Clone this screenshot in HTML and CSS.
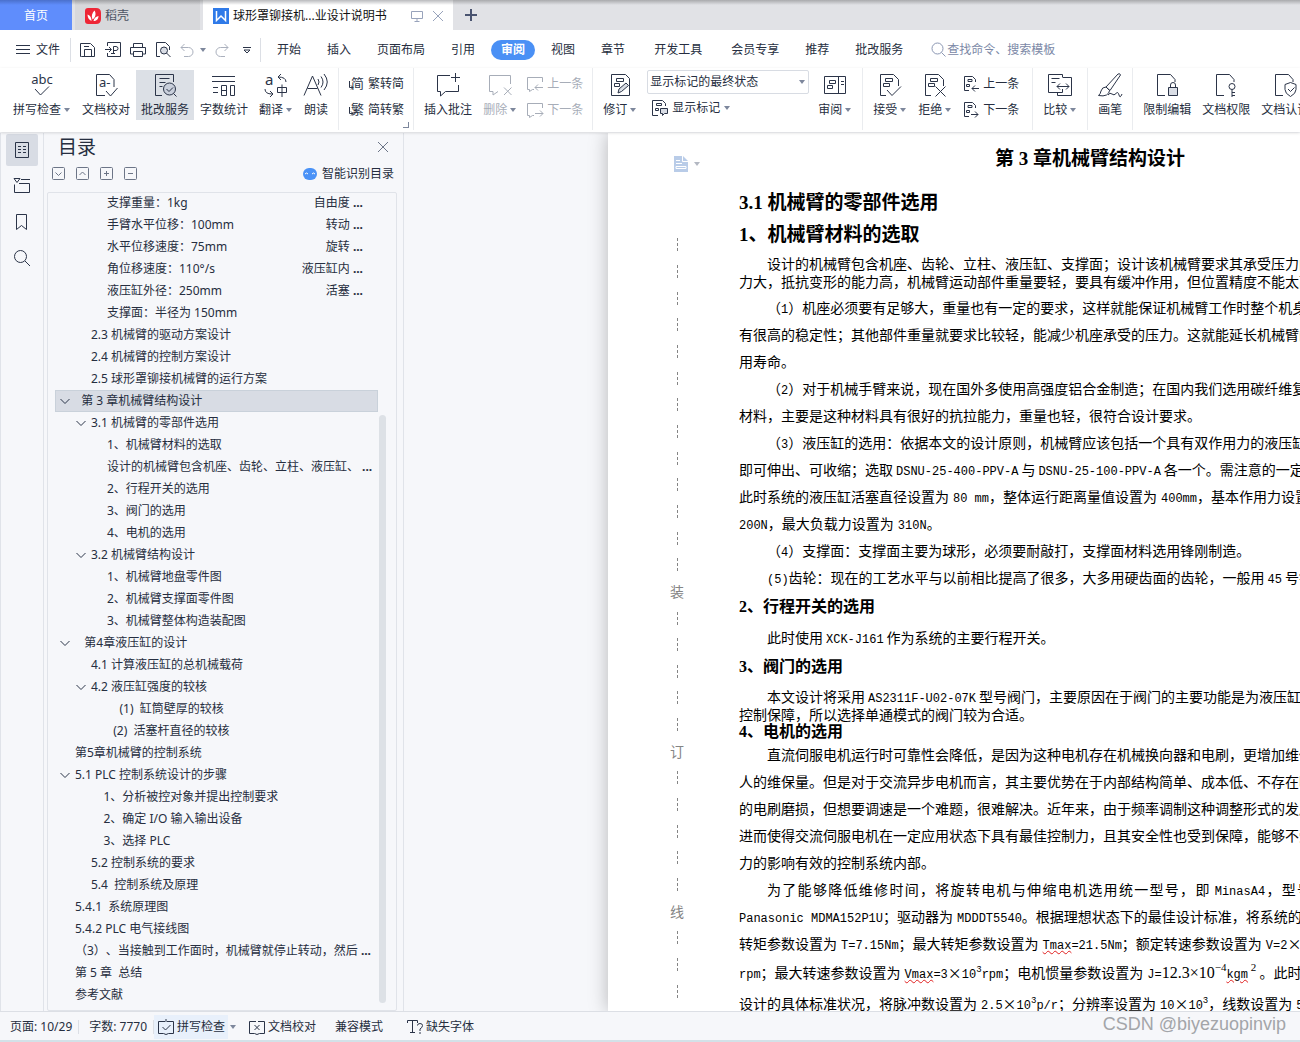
FILE: index.html
```html
<!DOCTYPE html>
<html lang="zh-CN">
<head>
<meta charset="utf-8">
<title>球形罩铆接机械臂毕业设计说明书</title>
<link rel="stylesheet" href="styles.css">
</head>
<body>
<svg class="sprite" aria-hidden="true">
  <symbol id="comment" viewBox="0 0 24 24"><path d="M14 2.500H1.500v16h3v4.500l5-4.500h13V12"/></symbol>
  <symbol id="revdoc" viewBox="0 0 24 24"><path d="M8 22.500H2.500v-21h13l5 5V13M7.500 5.500h7v3h-7zM5.500 10.500h6v3h-6z"/></symbol>
  <symbol id="sheet" viewBox="0 0 24 24"><path d="M10 22.500H2.500v-21h13l4.500 5V9"/></symbol>
  <symbol id="revdoc-s" viewBox="0 0 16 16"><path d="M6 14.500H1.500v-14h8l3 3V6M5 3.500h4v2H5zM3.500 8.500h3v2h-3z"/></symbol>
  <symbol id="note-s" viewBox="0 0 16 16"><path d="M15.500 6V1.500H.5v12h2v2l3-2H7"/></symbol>
  <symbol id="chev" viewBox="0 0 10 10"><path d="M.5 3L5 7.500 9.500 3"/></symbol>
</svg>

<header class="tabbar">
  <button class="tab home">首页</button>
  <button class="tab docer"><svg width="16" height="16" viewBox="0 0 16 16" stroke="none"><path d="M3 0h8q5 0 5 5v6q0 5-5 5H3q-3 0-3-3V3q0-3 3-3z" fill="#ee2636" stroke="none"/><path d="M7.500 11.500C6 8 7 5 9.500 2.500 11.500 6 10.500 9.500 7.500 11.500zM6.500 13C3.500 11.500 2.500 9 2.500 6.500 5.500 7.500 6.500 10 6.500 13zM8.500 13c.5-2.500 2-4.500 5-5C13.500 11 11.500 13 8.500 13z" fill="#fff" stroke="none"/></svg>稻壳</button>
  <div class="tab active">
    <svg width="16" height="16" viewBox="0 0 16 16"><path fill="#2f7ae8" stroke="none" d="M0 0h16v16H0z"/><path d="M3.500 3v9.500L8 8l4.500 4.500V3" fill="none" stroke="#fff" stroke-width="1.500"/></svg>
    <span class="tab-name">球形罩铆接机...业设计说明书</span>
    <button class="bare" aria-label="窗口"><svg class="muted" width="12" height="12" viewBox="0 0 12 12"><path d="M.5 1.500h11v7H.5zM6 8.500v3M3.500 11.500h5"/></svg></button>
    <button class="bare" aria-label="关闭"><svg class="muted" width="12" height="12" viewBox="0 0 12 12"><path d="M1 1l10 10M11 1L1 11"/></svg></button>
  </div>
  <button class="bare plus" aria-label="新建"><svg width="12" height="12" viewBox="0 0 12 12"><path d="M6 0v12M0 6h12" stroke="#4a5470" stroke-width="2"/></svg></button>
</header>

<nav class="menubar">
  <button class="file"><svg width="14" height="14" viewBox="0 0 14 14"><path d="M0 2.500h14M0 6.500h14M0 10.500h14"/></svg>文件</button>
  <div class="quick">
    <button class="bare" aria-label="保存"><svg width="16" height="16" viewBox="0 0 16 16"><path d="M1.500 14.500h-1V1.500h10l4 4v9zM4.500 14V7.500h7V14M4 4.500h5"/></svg></button>
    <button class="bare" aria-label="输出为PDF"><svg width="16" height="16" viewBox="0 0 16 16"><path d="M2.500 4V.5h13v14h-13V11M0 7.500h6M4 5l2.500 2.500L4 10M8.500 11V4.500h2.500q2 0 2 2t-2 2H8.500M6 11.500h4"/></svg></button>
    <button class="bare" aria-label="打印"><svg width="16" height="16" viewBox="0 0 16 16"><path d="M3.500 5V1.500h9V5M3.500 12h-3V5.500h15V12h-3M3.500 9.500h9v5h-9z"/></svg></button>
    <button class="bare" aria-label="打印预览"><svg width="16" height="16" viewBox="0 0 16 16"><path d="M5 14.500H1.500V.5h9l4 4V8"/><circle cx="9" cy="8.500" r="3.500" fill="#d9dde5"/><path d="M11.500 11l4 4"/></svg></button>
    <button class="bare undo" aria-label="撤销"><svg class="off" width="14" height="14" viewBox="0 0 14 14"><path d="M4.500 1L1 4.500 4.500 8M1 4.500h7.500a4 4 0 0 1 0 9H4"/></svg><i class="caret"></i></button>
    <button class="bare" aria-label="恢复"><svg class="off" width="14" height="14" viewBox="0 0 14 14"><path d="M9.500 1L13 4.500 9.500 8M13 4.500H5.500a4 4 0 0 0 0 9H10"/></svg></button>
    <button class="bare more" aria-label="更多"><svg width="8" height="8" viewBox="0 0 8 8"><path d="M0 1.500h8M1 4l3 3 3-3z"/></svg></button>
  </div>
  <div class="menus">
    <button>开始</button><button>插入</button><button>页面布局</button><button>引用</button><button class="on">审阅</button><button>视图</button><button>章节</button><button class="apart">开发工具</button><button class="apart">会员专享</button><button>推荐</button><button>批改服务</button>
  </div>
  <label class="search"><svg width="16" height="16" viewBox="0 0 16 16"><circle cx="6.500" cy="6.500" r="5.500"/><path d="M10.500 10.500l4 4"/></svg><input type="text" aria-label="查找" placeholder="查找命令、搜索模板"></label>
</nav>

<section class="ribbon">
  <button class="big drop"><svg viewBox="0 0 24 24"><text x="12" y="11" text-anchor="middle" font-size="13">abc</text><path d="M5 16l5.500 6L19 13.500"/></svg><span>拼写检查<i class="caret"></i></span></button>
  <button class="big"><svg viewBox="0 0 24 24"><path d="M11 22.500H2.500v-21h13l4.500 5V14M12 18l4.500 5 7-8"/><text x="5" y="14" font-size="13">a-</text></svg><span>文档校对</span></button>
  <button class="big pressed"><svg viewBox="0 0 24 24"><path d="M9 22.500H2.500v-21h18V9M6.500 5.500h10M6.500 9.500h6M6.500 13.500h3"/><circle cx="16.500" cy="16" r="6" fill="#c9cfdb"/><path d="M13.500 16l2.500 2.500 4-4M20.500 20.500l3 3"/></svg><span>批改服务</span></button>
  <button class="big"><svg viewBox="0 0 24 24"><path d="M0 3.500h23M0 8.500h23M1 14.500h5M1 19.500h5M9.500 12.500h5v10h-5zM9.500 17.500h5M18.500 12.500h4v10h-4z"/></svg><span>字数统计</span></button>
  <button class="big drop"><svg viewBox="0 0 24 24"><text x="1" y="12" font-size="15">a</text><path d="M1 16q0 5 7 5M6 18l3 3-3 3M17 1l-3 3 3 3M14 4q8 0 8 5M13.500 14.500h9v5h-9zM18 11.500V24"/></svg><span>翻译<i class="caret"></i></span></button>
  <button class="big"><svg viewBox="0 0 24 24"><path d="M0 22.500L8.500 3 17 22.500M3.500 15.500h10M14 6q2 3 0 6M17 3.500q4 5.500 0 11M20 1q6.500 8 0 16"/></svg><span>朗读</span></button>
  <i class="sep"></i>
  <div class="stack corner">
    <button><svg viewBox="0 0 16 16"><text x="3" y="12" font-size="13">简</text><path d="M1.500 5v6.500H5M3 9.500l2 2-2 2"/></svg>繁转简</button>
    <button><svg viewBox="0 0 16 16"><text x="3" y="12" font-size="13">繁</text><path d="M1.500 5v6.500H5M3 9.500l2 2-2 2"/></svg>简转繁</button>
  </div>
  <i class="sep"></i>
  <button class="big"><svg viewBox="0 0 24 24"><use href="#comment"/><path d="M19.500 0v9M15 4.500h9"/></svg><span>插入批注</span></button>
  <button class="big drop" disabled><svg viewBox="0 0 24 24"><path d="M10 18.500L5 22v-3.500H1.500v-16h21V11M16 14.500l7.500 7.500M23.500 14.500L16 22"/></svg><span>删除<i class="caret"></i></span></button>
  <div class="stack">
    <button disabled><svg viewBox="0 0 16 16"><use href="#note-s"/><path d="M16 11.500H8M11 8.500l-3 3 3 3"/></svg>上一条</button>
    <button disabled><svg viewBox="0 0 16 16"><use href="#note-s"/><path d="M8 11.500h8M13 8.500l3 3-3 3"/></svg>下一条</button>
  </div>
  <i class="sep"></i>
  <button class="big drop"><svg viewBox="0 0 24 24"><path d="M3.500 1.500h14l4 4v17h-18zM8.500 5.500h7v3h-7zM6.500 10.500h5v3h-5z"/><path d="M10 20l1-4 7-6 2.500 2.500-7 6z" fill="#d9dde5"/></svg><span>修订<i class="caret"></i></span></button>
  <div class="stack markup">
    <div class="picker"><select aria-label="修订显示方式"><option>显示标记的最终状态</option></select><i class="caret"></i></div>
    <button><svg viewBox="0 0 16 16"><path d="M6 15.500H.5V.5h10l3 3V6M4.500 3.500h5v2h-5zM3.500 8.500h3v2h-3z"/><path d="M8.500 8.500h7v5h-3l-2 2v-2h-2z" fill="#d9dde5"/></svg>显示标记<i class="caret"></i></button>
  </div>
  <button class="big drop"><svg viewBox="0 0 24 24"><path d="M1.500 3.500h21v17h-21zM15.500 3.500v17M6.500 7.500h6v3h-6zM4.500 12.500h5v3h-5zM18 8.500h3M18 11.500h3"/></svg><span>审阅<i class="caret"></i></span></button>
  <i class="sep"></i>
  <button class="big drop"><svg viewBox="0 0 24 24"><use href="#revdoc"/><path d="M9 17l5 5.500 9-9"/></svg><span>接受<i class="caret"></i></span></button>
  <button class="big drop"><svg viewBox="0 0 24 24"><use href="#revdoc"/><path d="M12.500 13.500l10 10M22.500 13.500l-10 10"/></svg><span>拒绝<i class="caret"></i></span></button>
  <div class="stack roomy">
    <button><svg viewBox="0 0 16 16"><use href="#revdoc-s"/><path d="M16 12.500H9M12 9.500l-3 3 3 3"/></svg>上一条</button>
    <button><svg viewBox="0 0 16 16"><use href="#revdoc-s"/><path d="M8 12.500h7M12 9.500l3 3-3 3"/></svg>下一条</button>
  </div>
  <i class="sep"></i>
  <button class="big drop"><svg viewBox="0 0 24 24"><path d="M14.500 4V1.500H.5v18h14V16M3.500 5.500h8M3.500 9.500h4M14.500 4.500h9v18h-14v-3M9 13.500h12M12 10.500l-3 3 3 3M18 10.500l3 3-3 3"/></svg><span>比较<i class="caret"></i></span></button>
  <i class="sep"></i>
  <button class="big"><svg viewBox="0 0 24 24"><path d="M8 14L20 1q2-1 2.500 1L12 17.500zM8 14q-4 0-5 4-.5 3-2.500 4.500 5 1 8-.5 3-2 3-4.500zM10 22q2-3 4-1t4-.5 3 1.500 3-1"/></svg><span>画笔</span></button>
  <i class="sep"></i>
  <button class="big"><svg viewBox="0 0 24 24"><use href="#sheet"/><path d="M13.500 14.500h9v8h-9z" fill="#d9dde5"/><path d="M15.500 14.500V12q0-2.500 2.500-2.500t2.500 2.500v2.500"/></svg><span>限制编辑</span></button>
  <button class="big"><svg viewBox="0 0 24 24"><use href="#sheet"/><circle cx="18" cy="13.500" r="3"/><path d="M18 16.500V24M18 19.500h3M18 22.500h3"/></svg><span>文档权限</span></button>
  <button class="big"><svg viewBox="0 0 24 24"><use href="#sheet"/><path d="M17.500 9.500l5.500 2v5q0 4-5.500 7-5.500-3-5.500-7v-5zM15 16l2.500 2.500 4-4"/></svg><span>文档认证</span></button>
</section>

<main class="work">
  <nav class="side">
    <button class="on" aria-label="目录"><svg width="16" height="16" viewBox="0 0 16 16"><path d="M1.500.5h13v15h-13zM4 4.500h3M4 7.500h3M4 10.500h3M9 4.500h3M9 7.500h3M9 10.500h3"/></svg></button>
    <button aria-label="章节"><svg width="16" height="16" viewBox="0 0 16 16"><path d="M.5 6.500V14.500h15v-9H5M7 1.500h9M0 .5h6L3 4.500z"/></svg></button>
    <button aria-label="书签"><svg width="16" height="16" viewBox="0 0 16 16"><path d="M2.500.5h10v15l-5-4-5 4z"/></svg></button>
    <button aria-label="查找"><svg width="16" height="16" viewBox="0 0 16 16"><circle cx="6.500" cy="6.500" r="6"/><path d="M11 11l5 5"/></svg></button>
  </nav>

  <aside class="outline">
    <div class="outline-head"><h2>目录</h2><button class="bare" aria-label="关闭目录"><svg class="thin" width="12" height="12" viewBox="0 0 12 12"><path d="M1 1l10 10M11 1L1 11"/></svg></button></div>
    <div class="outline-tools">
      <button class="bare" aria-label="展开"><svg width="14" height="14" viewBox="0 0 14 14"><rect x=".5" y=".5" width="12" height="12" rx="1"/><path d="M3.500 5.500l3 3 3-3"/></svg></button>
      <button class="bare" aria-label="收缩"><svg width="14" height="14" viewBox="0 0 14 14"><rect x=".5" y=".5" width="12" height="12" rx="1"/><path d="M3.500 8l3-3 3 3"/></svg></button>
      <button class="bare" aria-label="增加级别"><svg width="14" height="14" viewBox="0 0 14 14"><rect x=".5" y=".5" width="12" height="12" rx="1"/><path d="M4 6.500h5M6.500 4v5"/></svg></button>
      <button class="bare" aria-label="减少级别"><svg width="14" height="14" viewBox="0 0 14 14"><rect x=".5" y=".5" width="12" height="12" rx="1"/><path d="M4 6.500h5"/></svg></button>
      <button class="bare smart"><svg width="14" height="14" viewBox="0 0 14 14"><rect y="1" width="14" height="12" rx="6" fill="#4a92f7" stroke="none"/><path d="M2 7q1.500-2 3 0M9 7q1.500-2 3 0" stroke="#fff"/></svg>智能识别目录</button>
    </div>
    <div class="tree">
      <ul>
        <li class="d3">支撑重量：1kg<span class="tail">自由度<b>...</b></span></li>
        <li class="d3">手臂水平位移：100mm<span class="tail">转动<b>...</b></span></li>
        <li class="d3">水平位移速度：75mm<span class="tail">旋转<b>...</b></span></li>
        <li class="d3">角位移速度：110°/s<span class="tail">液压缸内<b>...</b></span></li>
        <li class="d3">液压缸外径：250mm<span class="tail">活塞<b>...</b></span></li>
        <li class="d3">支撑面：半径为 150mm</li>
        <li class="d2">2.3 机械臂的驱动方案设计</li>
        <li class="d2">2.4 机械臂的控制方案设计</li>
        <li class="d2">2.5 球形罩铆接机械臂的运行方案</li>
        <li class="d1 current"><svg><use href="#chev"/></svg>  第 3 章机械臂结构设计</li>
        <li class="d2"><svg><use href="#chev"/></svg>3.1 机械臂的零部件选用</li>
        <li class="d3">1、机械臂材料的选取</li>
        <li class="d3">设计的机械臂包含机座、齿轮、立柱、液压缸、<b>...</b></li>
        <li class="d3">2、行程开关的选用</li>
        <li class="d3">3、阀门的选用</li>
        <li class="d3">4、电机的选用</li>
        <li class="d2"><svg><use href="#chev"/></svg>3.2 机械臂结构设计</li>
        <li class="d3">1、机械臂地盘零件图</li>
        <li class="d3">2、机械臂支撑面零件图</li>
        <li class="d3">3、机械臂整体构造装配图</li>
        <li class="d1"><svg><use href="#chev"/></svg>   第4章液压缸的设计</li>
        <li class="d2">4.1 计算液压缸的总机械载荷</li>
        <li class="d2"><svg><use href="#chev"/></svg>4.2 液压缸强度的较核</li>
        <li class="d3">    (1)  缸筒壁厚的较核</li>
        <li class="d3">  (2)  活塞杆直径的较核</li>
        <li class="d1">第5章机械臂的控制系统</li>
        <li class="d1"><svg><use href="#chev"/></svg>5.1 PLC 控制系统设计的步骤</li>
        <li class="d2">    1、分析被控对象并提出控制要求</li>
        <li class="d2">    2、确定 I/O 输入输出设备</li>
        <li class="d2">    3、选择 PLC</li>
        <li class="d2">5.2 控制系统的要求</li>
        <li class="d2">5.4  控制系统及原理</li>
        <li class="d1">5.4.1  系统原理图</li>
        <li class="d1">5.4.2 PLC 电气接线图</li>
        <li class="d1">（3）、当接触到工作面时，机械臂就停止转动，然后<b>...</b></li>
        <li class="d1">第 5 章  总结</li>
        <li class="d1">参考文献</li>
      </ul>
      <i class="thumb"></i>
    </div>
  </aside>

  <div class="canvas">
    <article class="paper">
      <div class="binding">
        <button class="bare" aria-label="页面选项"><svg width="14" height="16" viewBox="0 0 14 16"><path d="M0 0h9l5 5v11H0z" fill="#b9cce8" stroke="none"/><path d="M8.500 0v5.500H14M2 4.500h4M2 7.500h6M2 10.500h10v2H2z" stroke="#fff"/></svg><i class="caret"></i></button>
        <div class="marks">
          <i></i><i></i><i></i><i></i><i></i><i></i><i></i><i></i><i></i><i></i><i></i><i></i><i></i><span>装</span><i></i><i></i><i></i><i></i><i></i><span>订</span><i></i><i></i><i></i><i></i><i></i><span>线</span><i></i><i></i><i></i>
        </div>
      </div>
      <div class="text">
        <h1>第 3 章机械臂结构设计</h1>
        <h2>3.1 机械臂的零部件选用</h2>
        <h2>1、机械臂材料的选取</h2>
        <p class="tight">设计的机械臂包含机座、齿轮、立柱、液压缸、支撑面；设计该机械臂要求其承受压力的<br>力大，抵抗变形的能力高，机械臂运动部件重量要轻，要具有缓冲作用，但位置精度不能太高</p>
        <p>（<span class="m">1</span>）机座必须要有足够大，重量也有一定的要求，这样就能保证机械臂工作时整个机身<br>有很高的稳定性；其他部件重量就要求比较轻，能减少机座承受的压力。这就能延长机械臂的<br>用寿命。</p>
        <p>（<span class="m">2</span>）对于机械手臂来说，现在国外多使用高强度铝合金制造；在国内我们选用碳纤维复<br>材料，主要是这种材料具有很好的抗拉能力，重量也轻，很符合设计要求。</p>
        <p>（<span class="m">3</span>）液压缸的选用：依据本文的设计原则，机械臂应该包括一个具有双作用力的液压缸<br>即可伸出、可收缩；选取<span class="m both">DSNU-25-400-PPV-A</span>与<span class="m both">DSNU-25-100-PPV-A</span>各一个。需注意的一定就<br>此时系统的液压缸活塞直径设置为<span class="m before">80 mm</span>，整体运行距离量值设置为<span class="m before">400mm</span>，基本作用力设置<br><span class="m">200N</span>，最大负载力设置为<span class="m before">310N</span>。</p>
        <p>（<span class="m">4</span>）支撑面：支撑面主要为球形，必须要耐敲打，支撑面材料选用锋刚制造。</p>
        <p><span class="m">(5)</span>齿轮：现在的工艺水平与以前相比提高了很多，大多用硬齿面的齿轮，一般用<span class="m both">45</span>号钢</p>
        <h3>2、行程开关的选用</h3>
        <p>此时使用<span class="m both">XCK-J161</span>作为系统的主要行程开关。</p>
        <h3>3、阀门的选用</h3>
        <p class="tight">本文设计将采用<span class="m both">AS2311F-U02-07K</span>型号阀门，主要原因在于阀门的主要功能是为液压缸提<br>控制保障，所以选择单通模式的阀门较为合适。</p>
        <h3>4、电机的选用</h3>
        <p>直流伺服电机运行时可靠性会降低，是因为这种电机存在机械换向器和电刷，更增加维修<br>人的维保量。但是对于交流异步电机而言，其主要优势在于内部结构简单、成本低、不存在明<br>的电刷磨损，但想要调速是一个难题，很难解决。近年来，由于频率调制这种调整形式的发展<br>进而使得交流伺服电机在一定应用状态下具有最佳控制力，且其安全性也受到保障，能够不受<br>力的影响有效的控制系统内部。</p>
        <p class="full">为了能够降低维修时间，将旋转电机与伸缩电机选用统一型号，即<span class="m before">MinasA4</span>，型号</p>
        <p class="cont"><span class="m">Panasonic MDMA152P1U</span>；驱动器为<span class="m before">MDDDT5540</span>。根据理想状态下的最佳设计标准，将系统的额<br>转矩参数设置为<span class="m before">T=7.15Nm</span>；最大转矩参数设置为<span class="m before"><u>Tmax</u>=21.5Nm</span>；额定转速参数设置为<span class="m before">V=2</span>×</p>
        <p class="cont tall"><span class="m">rpm</span>；最大转速参数设置为<span class="m before"><u>Vmax</u>=3</span>×<span class="m">10<sup>3</sup></span><span class="m">rpm</span>；电机惯量参数设置为<span class="m before">J=</span><span class="eq">12.3×10<sup>−4</sup></span><span class="m"><u>kgm</u></span><span class="eq"><sup> 2</sup></span> 。此时使<br>设计的具体标准状况，将脉冲数设置为<span class="m before">2.5</span>×<span class="m">10<sup>3</sup>p/r</span>；分辨率设置为<span class="m before">10</span>×<span class="m">10<sup>3</sup></span>，线数设置为<span class="m before">5</span></p>
      </div>
    </article>
  </div>
</main>

<footer class="status">
  <span class="cell">页面: 10/29</span>
  <span class="cell">字数: 7770</span>
  <button class="spell"><svg width="16" height="16" viewBox="0 0 16 16"><path d="M7 2.500H.5v12h5l2.500 1 2.500-1h5v-12H9M8 0v3M4.500 8l3 3 5-5"/></svg>拼写检查</button><i class="caret"></i>
  <button class="proof"><svg width="16" height="16" viewBox="0 0 16 16"><path d="M7 2.500H.5v12h5l2.500 1 2.500-1h5v-12H9M5.500 6l5 5M10.500 6l-5 5"/></svg>文档校对</button>
  <button class="compat">兼容模式</button>
  <button class="fonts"><svg width="16" height="16" viewBox="0 0 16 16"><path d="M.5 4V1.500h10V4M5.500 1.500v12M3 13.500h5M10.500 6.500q0-2 2.500-2t2.500 2-2.500 3.500v2M13 13v2"/></svg>缺失字体</button>
  <span class="watermark">CSDN @biyezuopinvip</span>
</footer>
</body>
</html>
```
FILE: styles.css
```css
* { box-sizing: border-box; }

body {
  margin: 0;
  height: 100vh;
  display: flex;
  flex-direction: column;
  overflow: hidden;
  background: #f6f7fa;
  color: #262e40;
  font: 12px/18px "Noto Sans", "Noto Sans CJK SC", sans-serif;
  text-spacing-trim: space-all;
}

button, input, select { font: inherit; color: inherit; }
button { background: none; border: 0; padding: 0; white-space: nowrap; }
h1, h2, h3, p, ul { margin: 0; padding: 0; }
svg { fill: none; stroke: #2b3448; flex: none; display: block; overflow: visible; }
svg text { fill: #2b3448; stroke: none; }
.sprite { position: absolute; width: 0; height: 0; overflow: hidden; }
.bare { display: flex; align-items: center; }

.caret {
  flex: none;
  width: 6px;
  border: 3px solid transparent;
  border-top: 4px solid #7d879c;
  border-bottom: 0;
}

/* document tabs */
.tabbar {
  flex: none;
  height: 30px;
  display: flex;
  background: linear-gradient(#a9aaad, #e1e2e6 5px);
}
.tab { display: flex; align-items: center; padding-top: 2px; }
.home { width: 72px; justify-content: center; margin-right: 3px; color: #fff; background: linear-gradient(#4a70cc, #5f8dfc 5px); }
.docer { width: 125px; padding-left: 10px; gap: 4px; margin-right: 3px; background: linear-gradient(#a0a1a4, #d7d8db 5px); color: #4d5464; }
.active { width: 250px; padding-left: 10px; background: linear-gradient(#b9babd, #fff 5px); color: #111; }
.tab-name { margin: 0 auto 0 4px; }
.active .bare { margin-right: 9px; }
.muted { stroke: #98a3bb; }
.plus { margin-left: 12px; }

/* menu row */
.menubar {
  flex: none;
  height: 38px;
  padding-top: 1px;
  display: flex;
  align-items: center;
  background: #fff;
}
.file { display: flex; align-items: center; gap: 6px; padding: 0 10px 0 16px; height: 24px; border-right: 1px solid #dcdfe5; }
.quick { display: flex; align-items: center; gap: 9px; height: 24px; padding: 0 9px; border-right: 1px solid #dcdfe5; }
.undo { gap: 6px; }
.off { stroke: #aab0bd; }
.more { margin-left: 5px; }
.menus { display: flex; margin-left: 3px; }
.menus button { padding: 0 13px; height: 20px; }
.menus .on { margin: 0 3px; padding: 0 10px; border-radius: 10px; background: #4a90f5; color: #fff; font-weight: 700; }
.menus .apart { padding-left: 16px; }
.search { display: flex; align-items: center; flex: 1; margin-left: 15px; }
.search svg { stroke: #8b97b3; }
.search input { flex: 1; min-width: 0; border: 0; padding: 0; background: none; outline: 0; }
.search input::placeholder { color: #7b88a6; opacity: 1; }

/* ribbon */
.ribbon {
  flex: none;
  position: relative;
  z-index: 2;
  height: 64px;
  display: flex;
  padding-left: 8px;
  background: #fff;
  box-shadow: 0 1px 3px #0002;
  overflow: clip;
  overflow-clip-margin: 4px;
}
.ribbon > * { flex: none; }
.big {
  height: 50px;
  margin: 2px 1px 0 0;
  padding: 3px 5px 0;
  display: flex;
  flex-direction: column;
  align-items: center;
  gap: 4px;
}
.big svg { width: 24px; height: 24px; }
.big span { display: flex; align-items: center; }
.big .caret { margin-left: 3px; }
.drop { padding-right: 6px; }
.pressed { background: #dce0e6; }
.ribbon button:disabled { color: #a7adb8; }
.ribbon button:disabled svg { stroke: #a7adb8; }
.sep { width: 1px; height: 62px; margin: 0 5px 0 4px; background: #eaecef; }
.stack { padding: 2px 5px 0 4px; display: flex; flex-direction: column; }
.stack button { height: 26px; padding-top: 2px; display: flex; align-items: center; gap: 4px; }
.stack svg { width: 16px; height: 16px; }
.roomy { padding: 2px 9px 0 5px; }
.corner { position: relative; }
.corner::after {
  content: "";
  position: absolute;
  right: 0;
  bottom: 4px;
  width: 5px;
  height: 5px;
  border: solid #7d879c;
  border-width: 0 1px 1px 0;
}
.markup { width: 170px; padding-right: 4px; }
.markup button { padding-left: 5px; }
.picker { display: flex; align-items: center; height: 24px; padding-right: 3px; border: 1px solid #d8dce3; border-radius: 2px; }
.picker select { flex: 1; appearance: none; border: 0; padding: 0 2px; background: none; outline: 0; }

/* body */
.work { flex: 1; min-height: 0; display: flex; padding-top: 1px; }
.side {
  flex: none;
  width: 44px;
  padding: 1px 5px;
  display: flex;
  flex-direction: column;
  gap: 4px;
  border: solid #e0e3e9;
  border-width: 0 1px;
}
.side button { width: 32px; height: 32px; display: grid; place-items: center; border-radius: 2px; }
.side .on { background: #d8dce4; }

.outline { flex: none; width: 360px; display: flex; flex-direction: column; border-right: 1px solid #e0e3e9; }
.outline-head { display: flex; justify-content: space-between; align-items: center; height: 28px; padding: 0 14px; }
.outline-head h2 { font-size: 19px; line-height: 28px; font-weight: 400; }
.thin { stroke: #6c7587; }
.outline-tools { display: flex; align-items: center; gap: 10px; height: 26px; padding: 0 9px 0 8px; }
.outline-tools svg { stroke: #6c7587; }
.smart { margin-left: auto; gap: 5px; }

.tree {
  position: relative;
  flex: 1;
  min-height: 0;
  margin: 5px 6px 0 3px;
  border: 1px solid #e0e3e9;
  border-radius: 2px;
  overflow: hidden;
}
.tree ul { list-style: none; padding: 0 18px 0 7px; margin-top: -1px; }
.tree li { display: flex; align-items: center; height: 22px; line-height: 20px; white-space: pre; }
.tree li svg { width: 10px; height: 10px; margin: 0 5px 0 -15px; }
.tree b { margin-left: 3px; }
.d1 { padding-left: 20px; }
.d2 { padding-left: 36px; }
.d3 { padding-left: 52px; }
.current { background: #d8dce4; outline: 1px solid #c9d1da; outline-offset: -1px; }
.tail { margin-left: auto; padding-right: 15px; }
.thumb { position: absolute; right: 10px; top: 222px; bottom: 7px; width: 7px; border-radius: 4px; background: #dde1e6; }

.canvas { flex: 1; min-width: 0; overflow: hidden; padding-left: 204px; }
.paper {
  height: 100%;
  width: 964px;
  display: grid;
  grid-template-columns: 131px 702px;
  grid-template-rows: minmax(0, 1fr);
  background: #fff;
  box-shadow: 0 0 18px #0004;
}
.binding { display: flex; flex-direction: column; padding: 23px 0 6px 62px; }
.binding .bare { gap: 6px; margin-left: 4px; }
.binding .caret { border-top-color: #b3b8c2; }
.marks { flex: 1; width: 14px; margin-top: 60px; display: flex; flex-direction: column; color: #858585; font-size: 14px; }
.marks > * { flex: 1; display: flex; align-items: center; justify-content: center; line-height: 14px; }
.marks i::before { content: ""; width: 1px; height: 14px; background: repeating-linear-gradient(#858585 0 3px, transparent 3px 5px); }

.text {
  padding-top: 12px;
  color: #000;
  font: 14px/27px "Noto Sans CJK SC", sans-serif;
  white-space: nowrap;
}
.text h1, .text h2, .text h3 { font-family: "Liberation Serif", "Noto Sans CJK SC", serif; font-weight: 700; }
.text h1 { font-size: 19px; line-height: 28px; text-align: center; margin-bottom: 14px; }
.text h2 { font-size: 19px; line-height: 32px; }
.text h3 { font-size: 16px; line-height: 18px; }
.text p { text-indent: 28px; }
.text h2 + p { margin: 3px 0 4px; }
.text p + h3 { margin-top: 7px; }
.text h3 + p { margin-top: 8px; }
.text h3 + .tight { margin-top: 11px; }
.text .tight { line-height: 18px; }
.text .tight + h3 { margin-top: 0; }
.text .tight + h3 + p { margin-top: 0; }
.text .cont { text-indent: 0; }
.text .full { width: 572px; text-align: justify; text-align-last: justify; white-space: normal; }
.text .tall { line-height: 31px; }
.m { font-family: "Liberation Mono", monospace; font-size: 12px; line-height: 0; }
.before { margin-left: 4px; }
.both { margin: 0 3px; }
.eq { font-family: "Liberation Serif", serif; font-size: 16px; line-height: 0; }
sup { font-size: 9px; line-height: 0; vertical-align: 6px; }
.eq sup { font-size: 11px; vertical-align: 7px; }
u { text-decoration: underline wavy #e02020 1px; }

/* status bar */
.status {
  flex: none;
  height: 31px;
  display: flex;
  align-items: center;
  padding: 1px 14px 0 0;
  border-top: 1px solid #dcdfe5;
  border-bottom: 2px solid #d3e1e8;
}
.status button { display: flex; align-items: center; gap: 3px; height: 24px; }
.cell { padding: 0 6px 0 10px; border-right: 1px solid #dcdfe5; line-height: 14px; }
.spell { padding: 0 3px 0 4px; background: #e8f0fb; }
.status > .caret { margin-left: 2px; }
.proof { margin-left: 13px; }
.compat { margin-left: 19px; }
.fonts { margin-left: 24px; }
.watermark { margin-left: auto; margin-top: -6px; color: #a3a5a9; font: 18px/24px "Liberation Sans", sans-serif; position: relative; z-index: 1; }
```
